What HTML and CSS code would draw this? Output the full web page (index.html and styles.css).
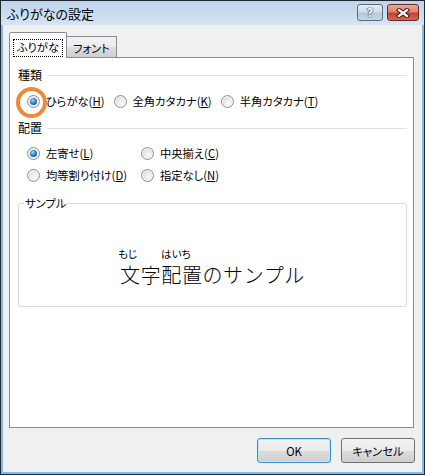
FILE: index.html
```html
<!DOCTYPE html>
<html lang="ja">
<head>
<meta charset="utf-8">
<title>ふりがなの設定</title>
<link rel="stylesheet" href="styles.css">
</head>
<body>
<div class="window">
  <div class="titlebar">
    <span class="title">ふりがなの設定</span>
    <div class="caption-buttons">
      <div class="cap help">?</div>
      <div class="cap close">
        <svg width="14" height="10" viewBox="-7 -5 14 10">
          <path d="M-4 -3 L4 3 M4 -3 L-4 3" stroke="#4a1512" stroke-width="4.2" stroke-linecap="square" fill="none"/>
          <path d="M-4 -3 L4 3 M4 -3 L-4 3" stroke="#ffffff" stroke-width="2.2" stroke-linecap="square" fill="none"/>
        </svg>
      </div>
    </div>
  </div>
  <div class="client">
    <div class="tabs">
      <div class="tab active"><span class="focus">ふりがな</span></div>
      <div class="tab inactive">フォント</div>
    </div>
    <div class="panel">
      <div class="section"><span>種類</span><div class="rule"></div></div>
      <div class="row1">
        <label class="opt"><span class="radio checked"></span>ひらがな(<u>H</u>)</label>
        <label class="opt"><span class="radio"></span>全角カタカナ(<u>K</u>)</label>
        <label class="opt"><span class="radio"></span>半角カタカナ(<u>T</u>)</label>
      </div>
      <div class="section second"><span>配置</span><div class="rule"></div></div>
      <div class="grid">
        <label class="opt"><span class="radio checked"></span>左寄せ(<u>L</u>)</label>
        <label class="opt"><span class="radio"></span>中央揃え(<u>C</u>)</label>
        <label class="opt"><span class="radio"></span>均等割り付け(<u>D</u>)</label>
        <label class="opt"><span class="radio"></span>指定なし(<u>N</u>)</label>
      </div>
      <fieldset class="sample">
        <legend>サンプル</legend>
        <div class="sample-wrap">
          <div class="sample-text">
            <div class="ruby-line"><span class="r1">もじ</span><span class="r2">はいち</span></div>
            <div class="main-text">文字配置のサンプル</div>
          </div>
        </div>
      </fieldset>
    </div>
    <div class="buttons">
      <button class="btn default">OK</button>
      <button class="btn">キャンセル</button>
    </div>
  </div>
  <div class="highlight"></div>
</div>
</body>
</html>
```

FILE: styles.css
```css
* { box-sizing: border-box; }
html, body { margin: 0; padding: 0; }
body {
  width: 425px;
  height: 475px;
  font-family: "Noto Sans CJK JP", "Noto Sans", sans-serif;
  font-size: 11.3px;
  color: #000;
  font-feature-settings: "palt";
  overflow: hidden;
}
.window {
  position: relative;
  width: 425px;
  height: 475px;
  border: 1px solid #202833;
  background: #7fbce9;
  display: flex;
  flex-direction: column;
}
.titlebar {
  height: 24px;
  background: linear-gradient(#bed3eb, #d6e4f3);
  display: flex;
  align-items: center;
  padding-left: 6px;
}
.title {
  font-size: 13px;
  line-height: 16px;
  color: #000;
  margin-top: 1px;
}
.caption-buttons {
  margin-left: auto;
  display: flex;
  align-items: flex-start;
  gap: 4px;
  margin-right: 5px;
  align-self: flex-start;
  margin-top: 3px;
}
.cap {
  height: 17px;
  border: 1px solid #5a6a7e;
  border-radius: 3px;
  display: flex;
  align-items: center;
  justify-content: center;
}
.help {
  width: 26px;
  background: linear-gradient(#e4edf7 0%, #cfdcec 48%, #b5c8df 52%, #c6d6ea 100%);
  color: #fff;
  font-family: "DejaVu Sans", sans-serif;
  font-weight: bold;
  font-size: 12px;
  line-height: 12px;
  text-shadow: 0 0 1px #2c3642, 0 0 1px #2c3642, 0 0 1px #2c3642;
}
.close {
  width: 32px;
  border-color: #6b2a24;
  background: linear-gradient(#e9a797 0%, #dc8471 45%, #c2412e 55%, #d46a50 100%);
}
.client {
  flex: 1;
  background: #f0f0f0;
  margin: 0 2px 2px 2px;
  padding: 7px 0 0 6px;
  display: flex;
  flex-direction: column;
}
.tabs {
  display: flex;
  align-items: flex-end;
  height: 26px;
  margin-bottom: -1px;
  position: relative;
  z-index: 1;
}
.tab {
  border: 1px solid #898c95;
  border-bottom: none;
  display: flex;
  align-items: center;
  justify-content: center;
}
.tab.active {
  width: 58px;
  height: 26px;
  background: #fff;
  border-radius: 2px 2px 0 0;
}
.focus {
  display: block;
  width: 50px;
  height: 18px;
  margin-top: 4px;
  border: 1px dotted #000;
  text-align: center;
  line-height: 15px;
}
.tab.inactive {
  width: 50px;
  height: 21px;
  border-left: none;
  margin-bottom: 1px;
  background: linear-gradient(#f3f3f3 0%, #ebebeb 50%, #dddddd 51%, #cfcfcf 100%);
  line-height: 16px;
  padding-top: 1px;
}
.panel {
  width: 405px;
  height: 371px;
  border: 1px solid #898c95;
  background: #fff;
  padding: 9px 6px 0 8px;
}
.section {
  display: flex;
  align-items: center;
  height: 16px;
  line-height: 16px;
  font-size: 12px;
}
.section.second { margin-top: 10px; }
.rule {
  flex: 1;
  height: 1px;
  background: #dce2e7;
  margin-left: 5px;
}
.opt {
  display: flex;
  align-items: center;
  height: 18px;
  line-height: 16px;
  white-space: nowrap;
}
.radio {
  position: relative;
  width: 13px;
  height: 13px;
  border-radius: 50%;
  border: 1px solid #8c8f94;
  background: radial-gradient(circle at 60% 65%, #fbfbfb 0%, #e4e4e4 55%, #cfcfcf 100%);
  box-shadow: inset 0 0 0 1px #f6f6f6;
  margin-right: 6px;
  flex: none;
}
.radio.checked::after {
  content: "";
  position: absolute;
  left: 2px;
  top: 2px;
  width: 7px;
  height: 7px;
  border-radius: 50%;
  background: radial-gradient(circle at 40% 35%, #a7dcff 0%, #3a8fd6 40%, #10508f 80%, #0b3e70 100%);
}
.row1 {
  display: flex;
  gap: 9px;
  margin-top: 9px;
  padding-left: 9px;
}
.grid {
  display: grid;
  grid-template-columns: 114px auto;
  row-gap: 4px;
  margin-top: 8px;
  padding-left: 9px;
}
.sample {
  margin: 11px 0 0 0;
  padding: 0;
  width: 389px;
  height: 112px;
  border: 1px solid #d3dde6;
  border-radius: 3px;
}
.sample legend {
  margin-left: 5px;
  padding: 0 1px;
  line-height: 16px;
  height: 16px;
}
.sample-wrap {
  display: flex;
  justify-content: center;
  padding-top: 37px;
}
.sample-text {
  display: flex;
  flex-direction: column;
}
.ruby-line {
  display: flex;
  font-size: 10.5px;
  line-height: 12px;
  height: 12px;
  margin-left: -2px;
}
.r1 { width: 43px; }
.main-text {
  font-size: 20px;
  line-height: 20px;
  height: 20px;
  margin-top: 5px;
  letter-spacing: 0.6px;
  font-feature-settings: normal;
  font-weight: 300;
}
.buttons {
  display: flex;
  justify-content: flex-end;
  gap: 10px;
  margin-top: 10px;
  padding-right: 7px;
}
.btn {
  width: 74px;
  height: 25px;
  border: 1px solid #707070;
  border-radius: 3px;
  background: linear-gradient(#f2f2f2 0%, #ebebeb 50%, #dddddd 51%, #cfcfcf 100%);
  font-family: inherit;
  font-size: 11.3px;
  font-feature-settings: "palt";
  color: #000;
  padding: 0;
  line-height: 16px;
}
.btn.default {
  border-color: #3593d5;
  box-shadow: inset 0 0 0 1px #b9e6fb;
}
.highlight {
  position: absolute;
  left: 15px;
  top: 86px;
  width: 31px;
  height: 31px;
  border: 4px solid #ef8a3c;
  border-radius: 50%;
}
```
